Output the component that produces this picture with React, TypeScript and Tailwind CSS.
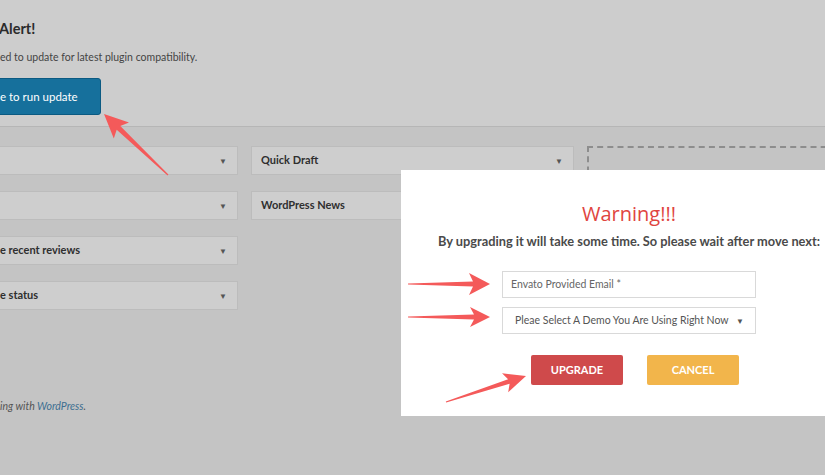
import React from 'react';

// ── Arrow helper (annotation overlay) ────────────────────────────────────────

type Pt = [number, number];

function arrowPoints(tail: Pt, tip: Pt, headLen: number, headHalf: number, shaftHalf: number) {
  const dx = tip[0] - tail[0];
  const dy = tip[1] - tail[1];
  const len = Math.hypot(dx, dy);
  const ux = dx / len;
  const uy = dy / len;
  const nx = -uy;
  const ny = ux;
  const bx = tip[0] - ux * headLen;
  const by = tip[1] - uy * headLen;
  const pts: Pt[] = [
    [tail[0] + nx * 0.6, tail[1] + ny * 0.6],
    [bx + ux * 2 + nx * shaftHalf, by + uy * 2 + ny * shaftHalf],
    [bx - ux * 2 + nx * headHalf, by - uy * 2 + ny * headHalf],
    tip,
    [bx - ux * 2 - nx * headHalf, by - uy * 2 - ny * headHalf],
    [bx + ux * 2 - nx * shaftHalf, by + uy * 2 - ny * shaftHalf],
    [tail[0] - nx * 0.6, tail[1] - ny * 0.6],
  ];
  return pts.map((p) => `${p[0].toFixed(1)},${p[1].toFixed(1)}`).join(' ');
}

const ARROWS: { tail: Pt; tip: Pt; head: number; half: number; shaft: number }[] = [
  { tail: [168, 175], tip: [104, 114], head: 22, half: 11, shaft: 2.6 },
  { tail: [408, 284], tip: [490, 284], head: 19, half: 11, shaft: 2.4 },
  { tail: [408, 317], tip: [490, 317], head: 18, half: 10, shaft: 2.4 },
  { tail: [446, 402], tip: [526, 376], head: 20, half: 10, shaft: 2.4 },
];

// ── Pieces ────────────────────────────────────────────────────────────────────

function Widget({ title, inset = false }: { title?: string; inset?: boolean }) {
  return (
    <div
      className={`h-[29px] bg-[#cecece] border border-[#bcbcbc] flex items-center justify-between pr-[10px] ${
        inset ? 'pl-[9px]' : 'pl-[1px]'
      }`}
    >
      <span className="text-[11px] font-bold text-[#2f2f2f]">{title}</span>
      <span className="text-[8px] text-[#555] leading-none">▼</span>
    </div>
  );
}

// ── Root ──────────────────────────────────────────────────────────────────────

export default function App() {
  return (
    <div className="relative w-[825px] h-[475px] overflow-hidden bg-[#c4c4c4] font-['Lato','Liberation_Sans',sans-serif]">
      {/* Notice */}
      <div className="h-[127px] bg-[#cdcdcd] border-b border-[#b6b6b6] pt-[18px]">
        <h2 className="-ml-[1px] text-[14.5px] leading-[22px] font-bold text-[#2b2b2b]">Alert!</h2>
        <p className="mt-[9px] text-[10.5px] leading-[16px] text-[#444]">ed to update for latest plugin compatibility.</p>
        <div className="mt-[13px] w-[105px] h-[37px] -ml-[4px] bg-[#16709c] border border-[#0b5a82] rounded-[3px] flex items-center pl-[3px]">
          <span className="text-[11.5px] text-white">e to run update</span>
        </div>
      </div>

      {/* Dashboard widgets */}
      <div className="flex gap-[13px] pt-[19px]">
        <div className="w-[240px] shrink-0 -ml-[2px] flex flex-col gap-[16px]">
          <Widget />
          <Widget />
          <Widget title="e recent reviews" />
          <Widget title="e status" />
        </div>
        <div className="w-[323px] shrink-0 flex flex-col gap-[16px]">
          <Widget title="Quick Draft" inset />
          <Widget title="WordPress News" inset />
        </div>
        <div className="w-[260px] shrink-0 h-[170px] border-2 border-dashed border-[#8d8d8d]" />
      </div>

      <p className="mt-[83px] text-[10.5px] italic text-[#555]">
        ing with <span className="text-[#3c6e90]">WordPress</span>.
      </p>

      {/* Modal */}
      <div className="absolute left-[401px] top-[170px] w-[456px] h-[246px] bg-white flex flex-col items-center pt-[30px]">
        <h3 className="text-[20px] leading-[28px] text-[#e0453f] font-['Open_Sans','Liberation_Sans',sans-serif]">
          Warning!!!
        </h3>
        <p className="mt-[4px] text-[12.8px] leading-[18px] font-bold text-[#4a4a4a] whitespace-nowrap">
          By upgrading it will take some time. So please wait after move next:
        </p>
        <div className="mt-[21px] w-[254px] h-[27px] border border-[#d9d9d9] flex items-center pl-[8px]">
          <span className="text-[10.5px] text-[#666]">Envato Provided Email *</span>
        </div>
        <div className="mt-[9px] w-[254px] h-[27px] border border-[#d9d9d9] flex items-center justify-between pl-[12px] pr-[11px]">
          <span className="text-[10.5px] text-[#555] whitespace-nowrap">Pleae Select A Demo You Are Using Right Now</span>
          <span className="text-[8px] text-[#555]">▼</span>
        </div>
        <div className="mt-[21px] ml-[12px] flex gap-[24px]">
          <div className="w-[92px] h-[30px] bg-[#cf4a4b] rounded-[2px] flex items-center justify-center">
            <span className="text-[11px] font-bold text-white">UPGRADE</span>
          </div>
          <div className="w-[92px] h-[30px] bg-[#f2b54b] rounded-[2px] flex items-center justify-center">
            <span className="text-[11px] font-bold text-white">CANCEL</span>
          </div>
        </div>
      </div>

      {/* Annotation arrows */}
      <svg className="absolute inset-0 pointer-events-none" width="825" height="475" viewBox="0 0 825 475">
        {ARROWS.map((a, i) => (
          <polygon key={i} points={arrowPoints(a.tail, a.tip, a.head, a.half, a.shaft)} fill="#f45a5a" />
        ))}
      </svg>
    </div>
  );
}
